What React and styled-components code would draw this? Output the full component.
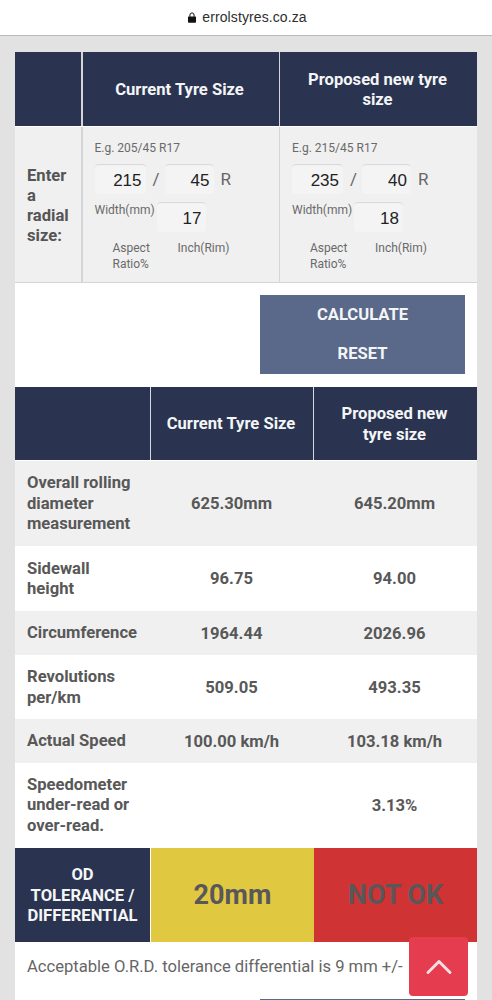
import React from "react";
import styled, { createGlobalStyle } from "styled-components";
import { ChevronUp } from "lucide-react";

const GlobalStyle = createGlobalStyle`
  html, body {
    margin: 0;
    padding: 0;
    height: 1000px;
    overflow: hidden;
    background: #e2e2e2;
    font-family: Roboto, "Liberation Sans", sans-serif;
  }
  * { box-sizing: border-box; }
`;

const Shell = styled.div`
  position: relative;
  width: 492px;
  height: 1000px;
  overflow: hidden;
`;

const AddressBar = styled.header`
  height: 36px;
  background: #fff;
  border-bottom: 1px solid #b9b9b9;
  display: flex;
  align-items: center;
  justify-content: center;
  gap: 6px;
  padding: 0 0 1px 3px;
  font-size: 14px;
  letter-spacing: 0.1px;
  font-family: "Liberation Sans", sans-serif;
  color: #2e2e2e;
`;

const Page = styled.main`
  margin: 16px 15px 0;
  width: 462px;
  background: #fff;
  height: 948px;
`;

const Grid = styled.div`
  display: grid;
  grid-template-columns: ${({ $cols }) => $cols};
  column-gap: ${({ $gap }) => $gap || "1px"};
  background: ${({ $line }) => $line || "transparent"};
`;

const HeadCell = styled.div`
  min-height: ${({ $h }) => $h || 74}px;
  background: #2a3450;
  color: #f4f5f7;
  display: flex;
  align-items: center;
  justify-content: center;
  text-align: center;
  font-weight: 700;
  font-size: 16.6px;
  line-height: 20.5px;
  padding: ${({ $flush }) => ($flush ? "2px 0 0" : "2px 17px 0 15px")};
`;

const InputRow = styled(Grid)`
  margin-top: 1px;
  border-bottom: 1px solid #d5d5d5;
`;

const PromptCell = styled.div`
  background: #f0f0f0;
  color: #555;
  font-weight: 700;
  font-size: 16.6px;
  line-height: 20px;
  padding: 3px 8px 0 12px;
  height: 155px;
  display: flex;
  align-items: center;
`;

const SizeCell = styled.div`
  background: #f0f0f0;
  height: 155px;
  padding: 13px 0 0 12px;
  color: #666;
  font-size: 12px;
`;

const Hint = styled.div`
  line-height: 16px;
  color: #6a6a6a;
`;

const SizeLine = styled.div`
  display: flex;
  align-items: center;
  margin-top: ${({ $top }) => $top || 0}px;
  font-size: 17px;
  color: #666;
`;

const SizeInput = styled.input`
  width: ${({ $w }) => $w || 50}px;
  height: 30px;
  border: 0;
  border-radius: 4px;
  background: #f4f4f4;
  box-shadow: inset 0 2px 1px -1px #d8d8d8;
  color: #222;
  font-family: "Liberation Sans", sans-serif;
  font-size: 17px;
  text-align: right;
  padding: 3px 4px 0 0;
  outline: none;
`;

const Slash = styled.span`
  width: 19px;
  padding-left: 7px;
`;

const Rim = styled.span`
  margin-left: 7px;
`;

const InlineLabel = styled.span`
  width: 62px;
  font-size: 12px;
  line-height: 16px;
  color: #6a6a6a;
  align-self: flex-start;
`;

const UnitLabels = styled.div`
  display: flex;
  margin-top: 8px;
  padding-left: 18px;
  line-height: 16px;
  color: #6a6a6a;
`;

const AspectLabel = styled.span`
  width: 65px;
`;

const ButtonBar = styled.div`
  display: flex;
  justify-content: flex-end;
  padding: 12px 12px 13px 0;
`;

const ButtonStack = styled.div`
  width: 205px;
  height: 79px;
  padding-bottom: 1px;
  background: #5a6889;
  display: flex;
  flex-direction: column;
`;

const ActionButton = styled.button`
  flex: 1;
  border: 0;
  padding: 0;
  background: transparent;
  color: #f4f5f7;
  font-family: inherit;
  font-weight: 700;
  font-size: 16.6px;
`;

const RowCell = styled.div`
  min-height: ${({ $h }) => $h}px;
  display: flex;
  align-items: center;
  justify-content: ${({ $label }) => ($label ? "flex-start" : "center")};
  text-align: ${({ $label }) => ($label ? "left" : "center")};
  padding: ${({ $label }) => ($label ? "1px 12px 0" : "2px 2px 0 0")};
  background: ${({ $shade }) => ($shade ? "#f0f0f0" : "#fff")};
  color: #585858;
  font-weight: 700;
  font-size: 16.6px;
  line-height: 20.5px;
`;

const DataGrid = styled(Grid)`
  margin-top: 1px;
`;

const VerdictGrid = styled(Grid)`
  margin-top: 1px;
`;

const VerdictCell = styled.div`
  height: 94px;
  display: flex;
  align-items: center;
  justify-content: center;
  background: ${({ $bg }) => $bg};
  border-left: ${({ $divided }) => ($divided ? "1px solid #fff" : "0")};
  color: #59575a;
  font-weight: 700;
  font-size: 27px;
`;

const Note = styled.p`
  margin: 0;
  padding: 15px 12px 0;
  color: #666;
  font-size: 16.6px;
  line-height: 20px;
  white-space: nowrap;
`;

const ScrollTop = styled.button`
  position: absolute;
  left: 409px;
  top: 937px;
  width: 59px;
  height: 59px;
  border: 0;
  border-radius: 4px;
  background: #e63c50;
  color: #f6dfe2;
  display: flex;
  align-items: center;
  justify-content: center;
  padding: 0;
`;

const NextButton = styled.div`
  position: absolute;
  left: 260px;
  top: 999px;
  width: 205px;
  height: 1px;
  background: #5a6889;
`;

const LockIcon = () => (
  <svg width="8" height="11" viewBox="0 0 8 11" aria-hidden="true">
    <path d="M0.5 4.5h7a.5.5 0 0 1 .5.5v5a.8.8 0 0 1-.8.8H.8A.8.8 0 0 1 0 10V5a.5.5 0 0 1 .5-.5z" fill="#111" />
    <path d="M1.9 4.8V3a2.1 2.1 0 0 1 4.2 0v1.8" fill="none" stroke="#111" strokeWidth="1" />
  </svg>
);

function SizeForm({ hint, width, aspect, rim }) {
  return (
    <SizeCell>
      <Hint>{hint}</Hint>
      <SizeLine $top={8}>
        <SizeInput $w={51} defaultValue={width} />
        <Slash>/</Slash>
        <SizeInput $w={49} defaultValue={aspect} />
        <Rim>R</Rim>
      </SizeLine>
      <SizeLine $top={8}>
        <InlineLabel>Width(mm)</InlineLabel>
        <SizeInput $w={49} defaultValue={rim} />
      </SizeLine>
      <UnitLabels>
        <AspectLabel>
          Aspect
          <br />
          Ratio%
        </AspectLabel>
        <span>Inch(Rim)</span>
      </UnitLabels>
    </SizeCell>
  );
}

const rows = [
  { label: ["Overall rolling", "diameter", "measurement"], a: "625.30mm", b: "645.20mm", h: 85, shade: true },
  { label: ["Sidewall", "height"], a: "96.75", b: "94.00", h: 65 },
  { label: ["Circumference"], a: "1964.44", b: "2026.96", h: 44, shade: true },
  { label: ["Revolutions", "per/km"], a: "509.05", b: "493.35", h: 64 },
  { label: ["Actual Speed"], a: "100.00 km/h", b: "103.18 km/h", h: 44, shade: true },
  { label: ["Speedometer", "under-read or", "over-read."], a: "", b: "3.13%", h: 84 },
];

export default function App() {
  return (
    <Shell>
      <GlobalStyle />
      <AddressBar>
        <LockIcon />
        errolstyres.co.za
      </AddressBar>
      <Page>
        <Grid $cols="66px 196px 197px" $gap="1.5px" $line="#d5d5d5">
          <HeadCell />
          <HeadCell>Current Tyre Size</HeadCell>
          <HeadCell>Proposed new tyre size</HeadCell>
        </Grid>
        <InputRow $cols="66px 196px 197px" $gap="1.5px" $line="#d5d5d5">
          <PromptCell>Enter a radial size:</PromptCell>
          <SizeForm hint="E.g. 205/45 R17" width="215" aspect="45" rim="17" />
          <SizeForm hint="E.g. 215/45 R17" width="235" aspect="40" rim="18" />
        </InputRow>
        <ButtonBar>
          <ButtonStack>
            <ActionButton>CALCULATE</ActionButton>
            <ActionButton>RESET</ActionButton>
          </ButtonStack>
        </ButtonBar>
        <Grid $cols="135px 162px 163px" $line="#d5dae3">
          <HeadCell $h={73} />
          <HeadCell $h={73}>Current Tyre Size</HeadCell>
          <HeadCell $h={73}>
            <span>
              Proposed new
              <br />
              tyre size
            </span>
          </HeadCell>
        </Grid>
        <DataGrid $cols="136px 163px 163px" $gap="0">
          {rows.map((row) => (
            <React.Fragment key={row.label[0]}>
              <RowCell $label $h={row.h} $shade={row.shade}>
                <span>
                  {row.label.map((line) => (
                    <div key={line}>{line}</div>
                  ))}
                </span>
              </RowCell>
              <RowCell $h={row.h} $shade={row.shade}>{row.a}</RowCell>
              <RowCell $h={row.h} $shade={row.shade}>{row.b}</RowCell>
            </React.Fragment>
          ))}
        </DataGrid>
        <VerdictGrid $cols="135px 164px 163px" $gap="0">
          <HeadCell $h={94} $flush>
            <span>
              OD
              <br />
              TOLERANCE /
              <br />
              DIFFERENTIAL
            </span>
          </HeadCell>
          <VerdictCell $bg="#e0c840" $divided>20mm</VerdictCell>
          <VerdictCell $bg="#d03333">NOT OK</VerdictCell>
        </VerdictGrid>
        <Note>Acceptable O.R.D. tolerance differential is 9 mm +/-</Note>
      </Page>
      <NextButton />
      <ScrollTop aria-label="Back to top">
        <ChevronUp size={44} strokeWidth={1.6} />
      </ScrollTop>
    </Shell>
  );
}
